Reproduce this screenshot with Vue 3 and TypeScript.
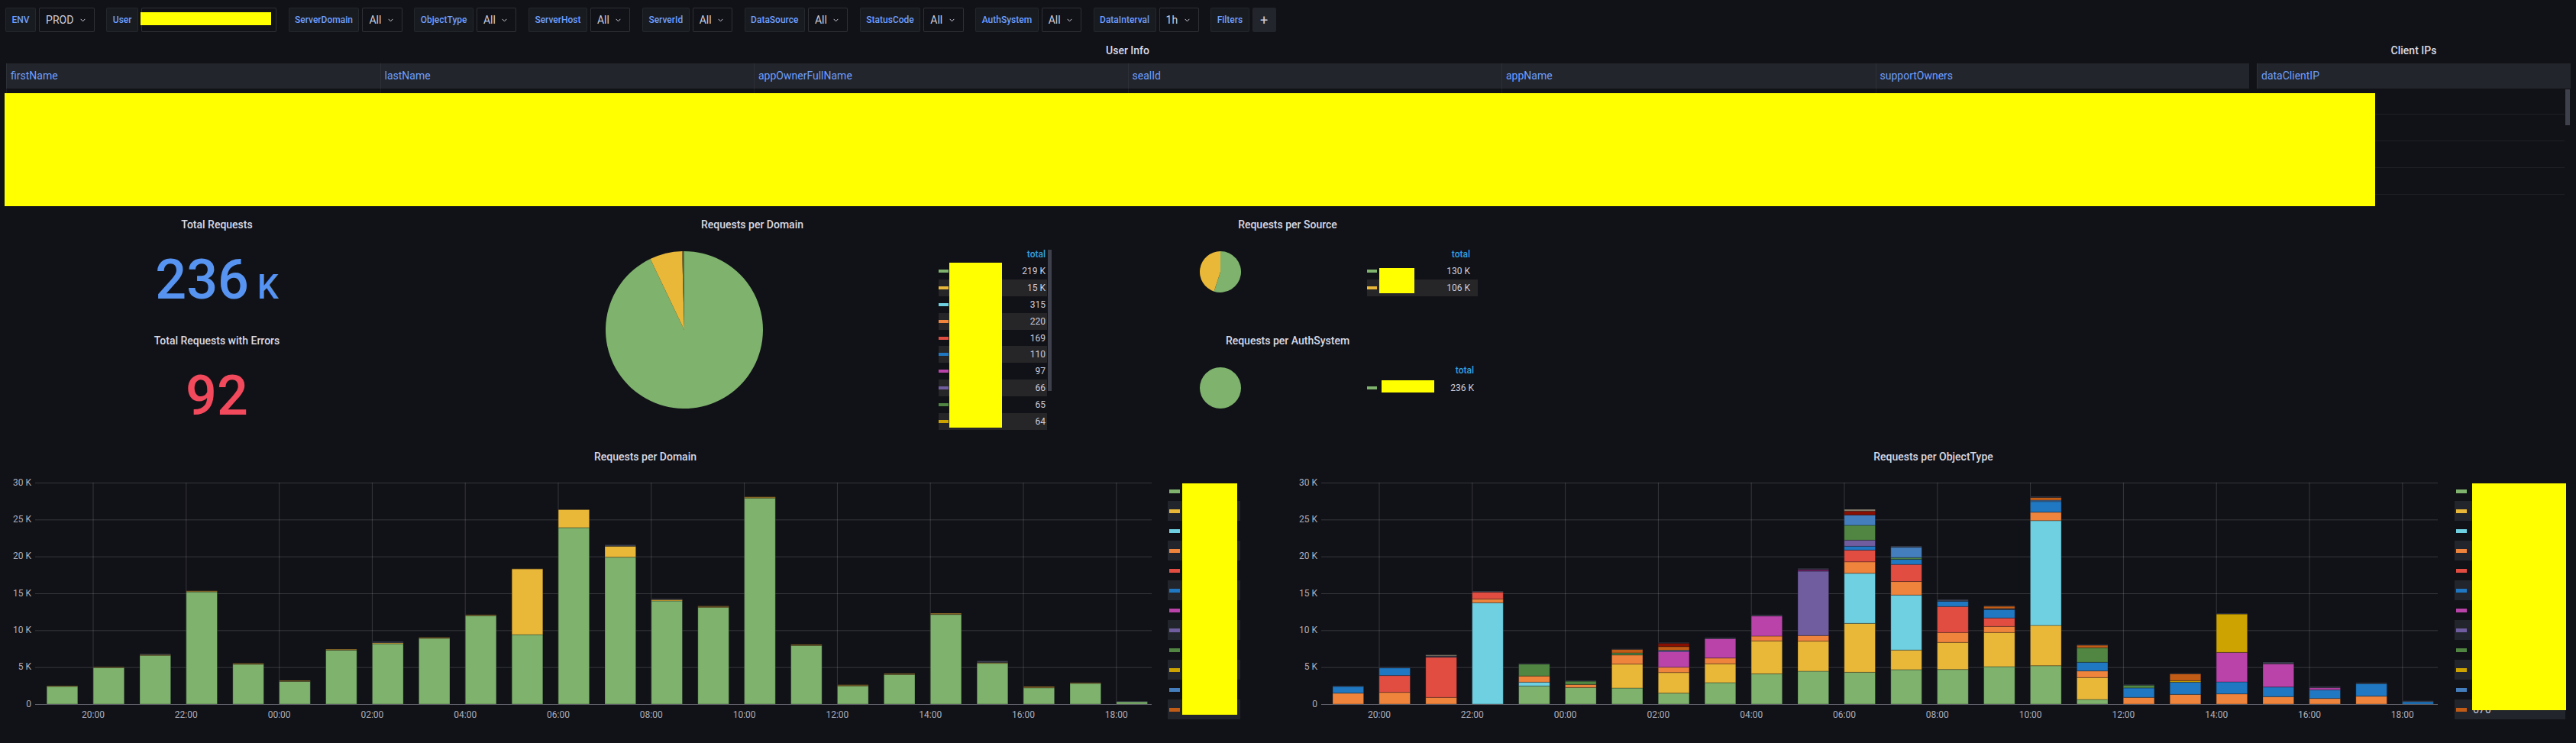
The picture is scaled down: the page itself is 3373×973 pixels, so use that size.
<template>
  <div class="dashboard">
    <!-- template variables -->
    <div class="toolbar">
      <div v-for="item in variables" :key="item.label" class="var-group">
        <label class="var-label">{{ item.label }}</label>
        <div v-if="item.value" class="var-select">
          {{ item.value }}
          <svg class="chevron" width="7" height="5" viewBox="0 0 7 5">
            <path d="M0.7 0.9 3.5 3.9 6.3 0.9" fill="none" stroke="#ccccdc" stroke-width="1" />
          </svg>
        </div>
        <div v-else class="var-input"><span class="redact user-redact"></span></div>
      </div>
      <div class="var-group filters">
        <label class="var-label">Filters</label>
        <button class="add-filter">+</button>
      </div>
    </div>

    <!-- tables -->
    <section class="table-row">
      <div class="panel user-panel">
        <h2 class="panel-title table-title">User Info</h2>
        <div class="table-head user-cols">
          <div v-for="col in userColumns" :key="col" class="head-cell">{{ col }}</div>
        </div>
        <div class="table-body">
          <div v-for="n in 4" :key="n" class="table-line user-cols">
            <div v-for="col in userColumns" :key="col" class="body-cell"></div>
          </div>
        </div>
      </div>
      <div class="panel client-panel">
        <h2 class="panel-title table-title">Client IPs</h2>
        <div class="table-head"><div class="head-cell">dataClientIP</div></div>
        <div class="table-body client-body">
          <div v-for="n in 4" :key="n" class="table-line"></div>
          <div class="scroll-thumb table-thumb"></div>
        </div>
      </div>
      <div class="redact table-redact"></div>
    </section>

    <!-- stats and pies -->
    <section class="summary-row">
      <div class="stat-column">
        <div class="panel stat-panel">
          <h2 class="panel-title">Total Requests</h2>
          <div class="stat-value blue">236<span class="stat-unit"> K</span></div>
        </div>
        <div class="panel stat-panel">
          <h2 class="panel-title">Total Requests with Errors</h2>
          <div class="stat-value red">92</div>
        </div>
      </div>

      <div class="panel domain-panel">
        <h2 class="panel-title">Requests per Domain</h2>
        <div class="pie-body">
          <svg class="domain-pie" width="206" height="206" viewBox="0 0 206 206">
            <path v-for="(s, i) in domainPie" :key="i" :d="s.d" :fill="s.color" />
          </svg>
          <div class="pie-legend domain-legend">
            <div class="legend-head">total</div>
            <div v-for="row in domainLegend" :key="row.color" class="legend-line">
              <i class="swatch" :style="{ background: row.color }"></i>
              <span>{{ row.total }}</span>
            </div>
            <div class="scroll-thumb legend-thumb"></div>
            <div class="redact domain-redact"></div>
          </div>
        </div>
      </div>

      <div class="small-pies">
        <div class="panel small-panel">
          <h2 class="panel-title">Requests per Source</h2>
          <div class="pie-body">
            <svg class="small-pie" width="54" height="54" viewBox="0 0 54 54">
              <path v-for="(s, i) in sourcePie" :key="i" :d="s.d" :fill="s.color" />
            </svg>
            <div class="pie-legend source-legend">
              <div class="legend-head">total</div>
              <div v-for="row in sourceLegend" :key="row.color" class="legend-line">
                <i class="swatch" :style="{ background: row.color }"></i>
                <span>{{ row.total }}</span>
              </div>
              <div class="redact source-redact"></div>
            </div>
          </div>
        </div>
        <div class="panel small-panel">
          <h2 class="panel-title">Requests per AuthSystem</h2>
          <div class="pie-body">
            <svg class="small-pie" width="54" height="54" viewBox="0 0 54 54">
              <circle cx="27" cy="27" r="27" :fill="colors.G" />
            </svg>
            <div class="pie-legend auth-legend">
              <div class="legend-head">total</div>
              <div class="legend-line">
                <i class="swatch" :style="{ background: colors.G }"></i>
                <span>236 K</span>
              </div>
              <div class="redact auth-redact"></div>
            </div>
          </div>
        </div>
      </div>
    </section>

    <!-- bar charts -->
    <section class="chart-row">
      <div v-for="chart in charts" :key="chart.title" class="panel chart-panel">
        <h2 class="panel-title">{{ chart.title }}</h2>
        <div class="chart-body">
          <svg :width="chart.width" height="340" :viewBox="`0 0 ${chart.width} 340`">
            <g class="grid">
              <line
                v-for="tick in yTicks"
                :key="tick.label"
                :x1="chart.plotLeft"
                :x2="chart.plotRight"
                :y1="tick.y"
                :y2="tick.y"
              />
              <line
                v-for="(label, i) in xLabels"
                :key="label"
                :x1="chart.gridStart + i * 121.8"
                :x2="chart.gridStart + i * 121.8"
                y1="20"
                y2="310"
              />
            </g>
            <g>
              <rect
                v-for="(seg, i) in chart.segments"
                :key="i"
                :x="seg.x"
                :y="seg.y"
                width="40.6"
                :height="seg.h"
                :fill="seg.color"
                class="bar"
              />
            </g>
            <line class="baseline" :x1="chart.plotLeft" :x2="chart.plotRight" y1="310.5" y2="310.5" />
            <text
              v-for="tick in yTicks"
              :key="tick.label"
              class="axis-text"
              text-anchor="end"
              :x="chart.plotLeft - 5"
              :y="tick.y + 3"
            >{{ tick.label }}</text>
            <text
              v-for="(label, i) in xLabels"
              :key="label"
              class="axis-text"
              text-anchor="middle"
              :x="chart.gridStart + i * 121.8"
              y="328"
            >{{ label }}</text>
          </svg>
          <div class="chart-legend" :style="{ width: chart.legendWidth + 'px' }">
            <div v-for="key in legendOrder" :key="key" class="chart-legend-line">
              <i class="swatch wide" :style="{ background: colors[key] }"></i>
              <span v-if="key === 'L' && chart.lastTotal" class="legend-hidden">{{ chart.lastTotal }}</span>
            </div>
            <div
              class="redact chart-redact"
              :style="{ left: chart.redactLeft + 'px', width: chart.redactWidth + 'px', height: chart.redactHeight + 'px' }"
            ></div>
          </div>
        </div>
      </div>
    </section>
  </div>
</template>

<script setup lang="ts">
const colors: Record<string, string> = {
  G: '#7eb26d',
  Y: '#eab839',
  C: '#6ed0e0',
  O: '#ef843c',
  R: '#e24d42',
  B: '#1f78c1',
  P: '#ba43a9',
  V: '#705da0',
  E: '#508642',
  A: '#cca300',
  K: '#447ebc',
  L: '#c15c17',
  M: '#890f02',
  N: '#6d1f62',
  T: '#9a7629',
  D: '#3c4150',
  W: '#8a8270',
};

const legendOrder = ['G', 'Y', 'C', 'O', 'R', 'B', 'P', 'V', 'E', 'A', 'K', 'L'];

const variables = [
  { label: 'ENV', value: 'PROD' },
  { label: 'User', value: '' },
  { label: 'ServerDomain', value: 'All' },
  { label: 'ObjectType', value: 'All' },
  { label: 'ServerHost', value: 'All' },
  { label: 'ServerId', value: 'All' },
  { label: 'DataSource', value: 'All' },
  { label: 'StatusCode', value: 'All' },
  { label: 'AuthSystem', value: 'All' },
  { label: 'DataInterval', value: '1h' },
];

const userColumns = ['firstName', 'lastName', 'appOwnerFullName', 'sealId', 'appName', 'supportOwners'];

const domainLegend = [
  { color: colors.G, total: '219 K' },
  { color: colors.Y, total: '15 K' },
  { color: colors.C, total: '315' },
  { color: colors.O, total: '220' },
  { color: colors.R, total: '169' },
  { color: colors.B, total: '110' },
  { color: colors.P, total: '97' },
  { color: colors.V, total: '66' },
  { color: colors.E, total: '65' },
  { color: colors.A, total: '64' },
];

const sourceLegend = [
  { color: colors.G, total: '130 K' },
  { color: colors.Y, total: '106 K' },
];

// angles in degrees, clockwise from 12 o'clock
function slice(r: number, start: number, end: number): string {
  const point = (deg: number) => {
    const a = (deg * Math.PI) / 180;
    return `${(r + r * Math.sin(a)).toFixed(2)} ${(r - r * Math.cos(a)).toFixed(2)}`;
  };
  const large = end - start > 180 ? 1 : 0;
  return `M${r} ${r}L${point(start)}A${r} ${r} 0 ${large} 1 ${point(end)}Z`;
}

const domainPie = [
  { d: slice(103, 0, 334.4), color: colors.G },
  { d: slice(103, 334.4, 358.4), color: colors.Y },
  { d: slice(103, 358.4, 359.1), color: colors.T },
  { d: slice(103, 359.1, 359.5), color: '#4d6f80' },
  { d: slice(103, 359.5, 360), color: colors.E },
];

const sourcePie = [
  { d: slice(27, 0, 198.3), color: colors.G },
  { d: slice(27, 198.3, 360), color: colors.Y },
];

// green, yellow, brown, dark, in thousands
const domainBars: number[][] = [
  [2.38, 0, 0.1, 0],
  [4.93, 0, 0.1, 0],
  [6.59, 0.1, 0, 0.14],
  [15.2, 0, 0.14, 0],
  [5.38, 0, 0.14, 0],
  [3.07, 0, 0.13, 0],
  [7.31, 0, 0.14, 0],
  [8.17, 0.13, 0, 0.18],
  [8.9, 0, 0.13, 0],
  [11.97, 0, 0.13, 0],
  [9.41, 8.9, 0.03, 0],
  [23.9, 2.45, 0.03, 0],
  [19.9, 1.48, 0, 0.21],
  [13.97, 0.17, 0, 0.14],
  [13.1, 0.1, 0.08, 0],
  [27.9, 0.12, 0.05, 0],
  [7.93, 0, 0.14, 0],
  [2.45, 0.1, 0.07, 0],
  [4.0, 0, 0.14, 0],
  [12.14, 0, 0.17, 0],
  [5.52, 0.1, 0, 0.24],
  [2.2, 0, 0.18, 0],
  [2.79, 0, 0.11, 0],
  [0.31, 0, 0, 0.1],
];

// colour key : value in thousands, bottom to top
const objectTypeBars: string[] = [
  'O1.48 B.9 D.1',
  'O1.59 R2.28 B1.03 D.14',
  'O.9 R5.45 D.17 W.14',
  'C13.72 O.52 R.93 D.14',
  'G2.45 C.52 O.83 E1.62 D.1',
  'G2.24 O.41 E.45 D.1',
  'G2.17 Y3.24 O1.24 E.28 L.48 D.07',
  'G1.48 Y2.79 O.72 P2.14 B.14 L.52 M.45 D.1',
  'G2.9 Y2.55 O.79 P2.62 D.14',
  'G4.1 Y4.45 O.66 P2.72 D.17',
  'G4.45 Y4.07 O.76 V8.72 N.24 D.14',
  'G4.31 Y6.62 C6.79 O1.55 R1.59 B.52 V.83 E2 K1.41 M.52 W.24',
  'G4.66 Y2.66 C7.45 O1.83 R2.31 B.69 E.24 K1.41 D.17',
  'G4.69 Y3.66 O1.34 R3.52 B.72 D.24',
  'G5.07 Y4.62 O.83 R1.14 B1.14 D.14 L.31 D.1',
  'G5.2 Y5.45 C14.2 O1.14 B1.45 K.17 L.38 D.14',
  'G.62 Y2.97 O.9 B1.17 E1.97 L.34 D.1',
  'O.9 B1.28 E.38 D.1',
  'O1.31 B1.66 A.2 L.93 D.07',
  'O1.38 B1.62 P4 A5.2 D.1',
  'O1 B1.31 P3.14 D.24',
  'O.76 B1.17 P.28 D.17',
  'O1.07 B1.69 D.14',
  'B.31 D.14',
];

const xLabels = ['20:00', '22:00', '00:00', '02:00', '04:00', '06:00', '08:00', '10:00', '12:00', '14:00', '16:00', '18:00'];

const PLOT_BOTTOM = 310;
const PX_PER_K = 290 / 30;

const yTicks = ['0', '5 K', '10 K', '15 K', '20 K', '25 K', '30 K'].map((label, i) => ({
  label,
  y: PLOT_BOTTOM + 0.5 - i * 5 * PX_PER_K,
}));

function toSegments(bars: [string, number][][], barStart: number) {
  const out: { x: number; y: number; h: number; color: string }[] = [];
  bars.forEach((bar, i) => {
    let sum = 0;
    for (const [key, value] of bar) {
      if (!value) continue;
      sum += value;
      out.push({
        x: barStart + i * 60.9,
        y: PLOT_BOTTOM - sum * PX_PER_K,
        h: value * PX_PER_K,
        color: colors[key],
      });
    }
  });
  return out;
}

const domainStacks = domainBars.map((row) =>
  row.map((value, i) => [['G', 'Y', 'T', 'D'][i], value] as [string, number]),
);

const objectStacks = objectTypeBars.map((row) =>
  row.split(' ').map((part) => [part[0], parseFloat(part.slice(1))] as [string, number]),
);

const charts = [
  {
    title: 'Requests per Domain',
    width: 1520,
    plotLeft: 46,
    plotRight: 1508,
    gridStart: 122,
    segments: toSegments(domainStacks, 61.2),
    legendWidth: 95,
    redactLeft: 19,
    redactWidth: 72,
    redactHeight: 303,
    lastTotal: '',
  },
  {
    title: 'Requests per ObjectType',
    width: 1515,
    plotLeft: 40,
    plotRight: 1502,
    gridStart: 116,
    segments: toSegments(objectStacks, 55),
    legendWidth: 145,
    redactLeft: 23,
    redactWidth: 123,
    redactHeight: 297,
    lastTotal: '676',
  },
];
</script>

<style>
html,
body {
  margin: 0;
  background: #111217;
  overflow: hidden;
}
</style>

<style scoped>
.dashboard {
  width: 3373px;
  height: 973px;
  overflow: hidden;
  background: #111217;
  color: #ccccdc;
  font-family: Roboto, "Liberation Sans", sans-serif;
  font-size: 12px;
}

.redact {
  position: absolute;
  background: #ffff00;
}

/* toolbar */
.toolbar {
  display: flex;
  gap: 15.5px;
  height: 32px;
  padding: 10px 0 0 7px;
}

.var-group {
  display: flex;
  gap: 4px;
}

.var-label {
  display: flex;
  align-items: center;
  padding: 0 7.5px;
  background: #181b1f;
  border: 1px solid rgba(204, 204, 220, 0.07);
  border-radius: 2px;
  color: #6e9fff;
  font-size: 12px;
  font-weight: 500;
}

.var-select,
.var-input {
  display: flex;
  align-items: center;
  box-sizing: border-box;
  padding: 0 11px 0 8px;
  background: #111217;
  border: 1px solid rgba(204, 204, 220, 0.16);
  border-radius: 2px;
  font-size: 14px;
  white-space: pre;
}

.chevron {
  margin-left: 5px;
}

.var-input {
  position: relative;
  width: 177px;
}

.user-redact {
  left: -2px;
  top: 5px;
  width: 171px;
  height: 17px;
}

.add-filter {
  width: 31px;
  padding: 0;
  background: #22252b;
  border: none;
  border-radius: 2px;
  color: #ccccdc;
  font-family: inherit;
  font-size: 18px;
}

/* panels */
.panel {
  box-sizing: border-box;
  min-width: 0;
}

.panel-title {
  margin: 0;
  height: 28px;
  color: #d8d9e3;
  font-size: 14px;
  font-weight: 500;
  line-height: 28px;
  text-align: center;
}

.table-row {
  position: relative;
  display: grid;
  grid-template-columns: 2951px 422px;
  height: 230px;
  margin-top: 8px;
  overflow: hidden;
}

.table-title {
  height: 33px;
  line-height: 32px;
}

.user-panel {
  padding: 0 6px 0 8px;
}

.client-panel {
  padding: 0 7px 0 4px;
}

.table-head {
  height: 33px;
  background: #22252b;
}

.user-cols {
  display: grid;
  grid-template-columns: repeat(6, 1fr);
}

.head-cell {
  padding-left: 6px;
  color: #6e9fff;
  font-size: 14px;
  font-weight: 400;
  line-height: 33px;
  box-shadow: inset 1px 0 0 rgba(204, 204, 220, 0.07);
}

.table-line {
  box-sizing: border-box;
  height: 35px;
  border-bottom: 1px solid rgba(204, 204, 220, 0.08);
}

.table-line:first-child {
  height: 34px;
}

.body-cell {
  box-shadow: inset 1px 0 0 rgba(204, 204, 220, 0.07);
}

.client-body {
  position: relative;
  padding-right: 8px;
}

.scroll-thumb {
  position: absolute;
  right: 0;
  background: #3e404b;
  border: 1px solid #111217;
  box-sizing: border-box;
}

.table-thumb {
  top: 0;
  width: 8px;
  height: 49px;
}

.table-redact {
  left: 6px;
  top: 72px;
  width: 3104px;
  height: 148px;
}

/* summary row */
.summary-row {
  display: grid;
  grid-template-columns: 568px 834px 568px;
  height: 304px;
}

.stat-panel,
.small-panel {
  height: 152px;
}

.stat-value {
  margin-top: 23px;
  font-size: 72px;
  font-weight: 500;
  line-height: 72px;
  text-align: center;
}

.stat-unit {
  font-size: 44px;
}

.blue {
  color: #5794f2;
}

.red {
  color: #f2495c;
}

.pie-body {
  display: flex;
  align-items: flex-start;
}

.domain-pie {
  flex: none;
  margin: 21px 0 0 225px;
}

.small-pie {
  flex: none;
  margin: 21px 0 0 168.5px;
}

.pie-legend {
  position: relative;
  flex: none;
  box-sizing: border-box;
  font-size: 12px;
}

.legend-head {
  height: 18px;
  color: #33a2e5;
  font-weight: 500;
  line-height: 14px;
  text-align: right;
}

.legend-line {
  display: flex;
  align-items: center;
  justify-content: space-between;
  height: 21.9px;
}

.legend-line:nth-child(odd) {
  background: #262628;
}

.swatch {
  display: block;
  width: 13px;
  height: 4px;
}

.swatch.wide {
  width: 14px;
  height: 5px;
}

.domain-legend {
  width: 149px;
  margin: 18px 0 0 230px;
  padding-right: 7px;
}

.domain-legend .legend-head {
  padding-right: 2px;
}

.domain-legend .legend-line {
  padding-right: 2px;
}

.legend-thumb {
  top: 0;
  width: 7px;
  height: 187px;
}

.domain-redact {
  left: 14px;
  top: 18px;
  width: 69px;
  height: 216px;
}

.source-legend {
  width: 145px;
  margin: 18px 0 0 165.5px;
}

.source-legend .legend-head,
.source-legend .legend-line {
  padding-right: 10px;
}

.source-redact {
  left: 16px;
  top: 25px;
  width: 46px;
  height: 33px;
}

.auth-legend {
  width: 142px;
  margin: 18px 0 0 165.5px;
}

.auth-legend .legend-head,
.auth-legend .legend-line {
  padding-right: 2px;
}

.auth-legend .legend-line {
  background: none;
  margin-top: 1px;
}

.auth-redact {
  left: 19px;
  top: 20px;
  width: 69px;
  height: 16px;
}

/* charts */
.chart-row {
  display: grid;
  grid-template-columns: 1690px 1683px;
}

.chart-body {
  display: flex;
  align-items: flex-start;
}

.grid line {
  stroke: rgba(204, 204, 220, 0.2);
  stroke-width: 1;
}

.bar {
  stroke: #111217;
  stroke-opacity: 0.3;
  stroke-width: 1;
}

.baseline {
  stroke: rgba(204, 204, 220, 0.3);
  stroke-width: 1;
}

.axis-text {
  fill: rgba(204, 204, 220, 0.85);
  font-size: 12px;
}

.chart-legend {
  position: relative;
  flex: none;
  margin: 18px 0 0 9px;
}

.chart-legend-line {
  position: relative;
  display: flex;
  align-items: center;
  height: 26px;
  padding-left: 2px;
}

.chart-legend-line:nth-child(even) {
  background: #22252b;
}

.legend-hidden {
  margin-left: 8px;
  font-size: 14px;
}

.chart-redact {
  top: 3px;
}
</style>
